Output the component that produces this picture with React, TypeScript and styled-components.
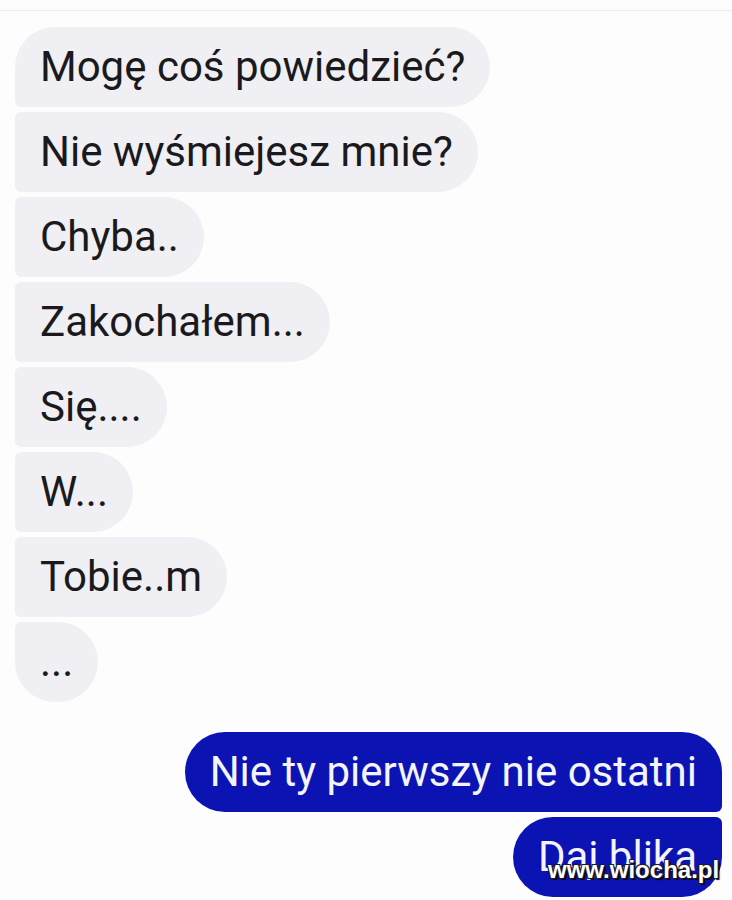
import React from "react";
import styled, { createGlobalStyle, css } from "styled-components";

const Global = createGlobalStyle`
  html, body { margin: 0; padding: 0; background: #fdfdfe; }
  body { font-family: Roboto, "Noto Sans", sans-serif; }
`;

const Page = styled.div`
  position: relative;
  width: 732px;
  height: 900px;
  overflow: hidden;
  background: #fdfdfe;
`;

const TopRule = styled.div`
  margin-top: 10px;
  height: 1px;
  background: #ededf0;
`;

const Thread = styled.div`
  display: flex;
  flex-direction: column;
  padding: 16px 10px 0 15px;
`;

const Group = styled.div<{ $side: "in" | "out" }>`
  display: flex;
  flex-direction: column;
  align-items: ${(p) => (p.$side === "in" ? "flex-start" : "flex-end")};
  gap: 5px;
  & + & { margin-top: 30px; }
`;

type Pos = "first" | "middle" | "last";

const big = 40;
const small = 6;

const Bubble = styled.div<{ $side: "in" | "out"; $pos: Pos }>`
  box-sizing: border-box;
  height: 80px;
  line-height: 80px;
  padding: 0 25px;
  font-size: 42px;
  white-space: nowrap;
  ${(p) =>
    p.$side === "in"
      ? css`
          background: #efeff4;
          color: #1a1a1c;
          border-radius: ${p.$pos === "first" ? big : small}px ${big}px ${big}px
            ${p.$pos === "last" ? big : small}px;
        `
      : css`
          background: #0c13b3;
          color: #f4f4ff;
          border-radius: ${big}px ${p.$pos === "first" ? big : small}px
            ${p.$pos === "last" ? big : small}px ${big}px;
        `}
`;

const Watermark = styled.div`
  position: absolute;
  left: 548px;
  top: 858px;
  font-family: "Liberation Sans", Arial, sans-serif;
  font-weight: bold;
  font-size: 24px;
  line-height: 24px;
  color: #ffffff;
  text-shadow: 1px 1px 0 #1a1a2a, -1px -1px 0 #1a1a2a, 1px -1px 0 #1a1a2a,
    -1px 1px 0 #1a1a2a, 2px 2px 1px #000;
`;

const incoming = [
  "Mogę coś powiedzieć?",
  "Nie wyśmiejesz mnie?",
  "Chyba..",
  "Zakochałem...",
  "Się....",
  "W...",
  "Tobie..m",
  "...",
];

const outgoing = ["Nie ty pierwszy nie ostatni", "Daj blika"];

const posOf = (i: number, n: number): Pos =>
  i === 0 ? "first" : i === n - 1 ? "last" : "middle";

export default function App() {
  return (
    <Page>
      <Global />
      <TopRule />
      <Thread>
        <Group $side="in">
          {incoming.map((t, i) => (
            <Bubble key={t} $side="in" $pos={posOf(i, incoming.length)}>
              {t}
            </Bubble>
          ))}
        </Group>
        <Group $side="out">
          {outgoing.map((t, i) => (
            <Bubble key={t} $side="out" $pos={posOf(i, outgoing.length)}>
              {t}
            </Bubble>
          ))}
        </Group>
      </Thread>
      <Watermark>www.wiocha.pl</Watermark>
    </Page>
  );
}
